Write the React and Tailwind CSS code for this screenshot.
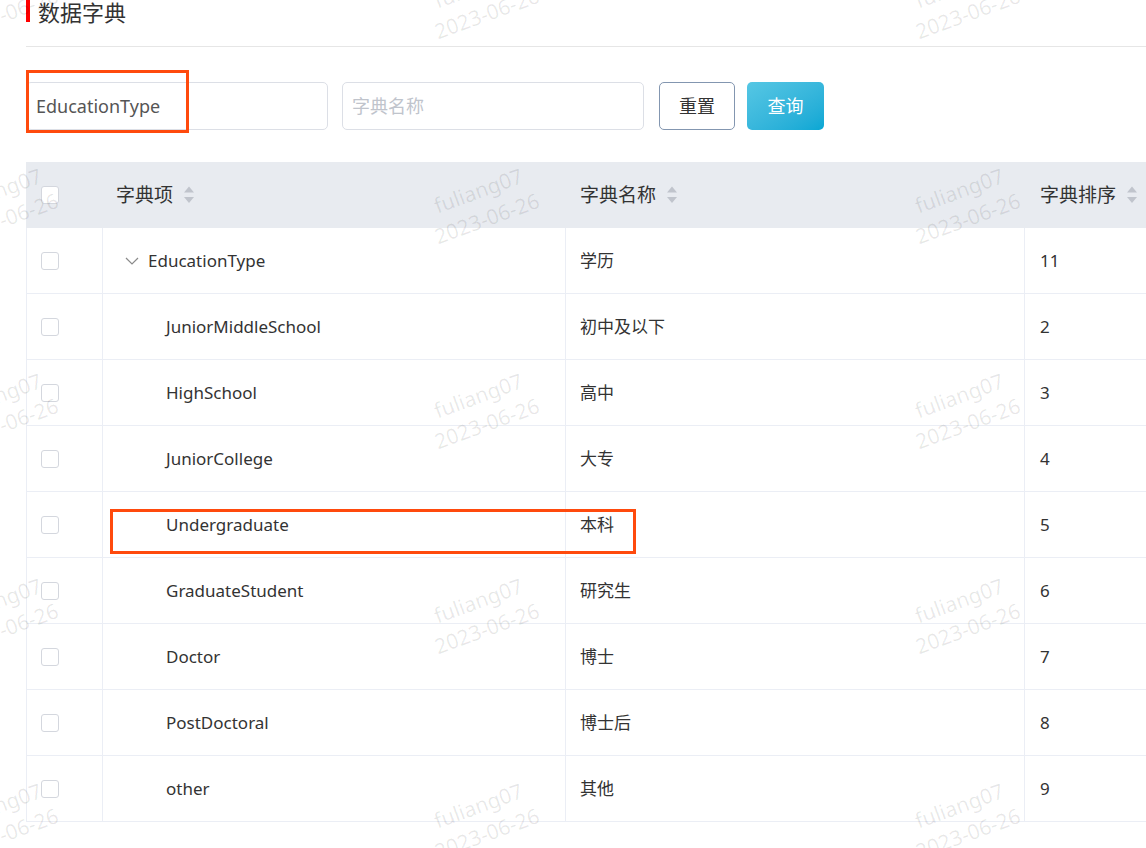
import React from "react";

const ROWS = [
  { code: "EducationType", name: "学历", sort: "11", parent: true },
  { code: "JuniorMiddleSchool", name: "初中及以下", sort: "2" },
  { code: "HighSchool", name: "高中", sort: "3" },
  { code: "JuniorCollege", name: "大专", sort: "4" },
  { code: "Undergraduate", name: "本科", sort: "5" },
  { code: "GraduateStudent", name: "研究生", sort: "6" },
  { code: "Doctor", name: "博士", sort: "7" },
  { code: "PostDoctoral", name: "博士后", sort: "8" },
  { code: "other", name: "其他", sort: "9" },
];

// watermark grid: column centres and row centres
const WM_X = [1, 482, 963];
const WM_Y = [0, 205, 410, 615, 820];

function SortIcon() {
  return (
    <svg width="12" height="20" viewBox="0 0 12 20" className="ml-[10px] shrink-0">
      <path d="M6 1.5 L11 7.5 L1 7.5 Z" fill="#c0c4cc" />
      <path d="M1 12 L11 12 L6 18 Z" fill="#c0c4cc" />
    </svg>
  );
}

function Checkbox() {
  return <span className="block h-[18px] w-[18px] rounded-[3px] border border-[#d4d7de] bg-white" />;
}

function Watermarks() {
  const items = [];
  for (const x of WM_X) for (const y of WM_Y) items.push({ x, y });
  return (
    <div className="pointer-events-none absolute inset-0">
      {items.map((w, i) => (
        <div
          key={i}
          className="absolute -translate-x-1/2 -translate-y-1/2 -rotate-[20deg] whitespace-nowrap text-[21px] leading-[29px] text-black/[0.09]"
          style={{ left: w.x, top: w.y }}
        >
          <div className="pl-[10px]">fuliang07</div>
          <div>2023-06-26</div>
        </div>
      ))}
    </div>
  );
}

export default function App() {
  return (
    <div className="relative h-[848px] w-[1146px] overflow-hidden bg-white pl-[26px] font-['Noto_Sans','Noto_Sans_CJK_SC',sans-serif] text-[#333]">
      {/* title */}
      <div className="flex h-[47px] items-start border-b border-[#e6e6e6]">
        <span className="h-[22px] w-[4px] bg-[#ff0000]" />
        <span className="ml-[8px] -mt-[3px] text-[22px] leading-[30px]">数据字典</span>
      </div>

      {/* search form */}
      <div className="mt-[35px] flex items-center">
        <div className="flex h-[48px] w-[302px] items-center rounded-[5px] border border-[#dcdfe6] pl-[9px] text-[18px] text-[#555]">
          EducationType
        </div>
        <div className="ml-[14px] flex h-[48px] w-[302px] items-center rounded-[5px] border border-[#dcdfe6] pl-[9px] text-[18px] text-[#c0c4cc]">
          字典名称
        </div>
        <button className="ml-[15px] h-[48px] w-[76px] rounded-[5px] border border-[#8396b0] bg-white text-[18px] text-[#333]">
          重置
        </button>
        <button className="ml-[12px] h-[48px] w-[77px] rounded-[5px] bg-linear-to-br from-[#55c7e4] to-[#05a7d4] text-[18px] text-white">
          查询
        </button>
      </div>

      {/* table */}
      <div className="mt-[32px] w-[1200px]">
        <div className="grid h-[66px] grid-cols-[76px_463px_459px_202px] items-center bg-[#e8ebf0] text-[19px]">
          <div className="border-l border-transparent pl-[14px]">
            <Checkbox />
          </div>
          <div className="flex items-center border-l border-transparent pl-[13px]">
            字典项<SortIcon />
          </div>
          <div className="flex items-center border-l border-transparent pl-[14px]">
            字典名称<SortIcon />
          </div>
          <div className="flex items-center border-l border-transparent pl-[15px]">
            字典排序<SortIcon />
          </div>
        </div>

        {ROWS.map((r) => (
          <div key={r.code} className="grid h-[66px] grid-cols-[76px_463px_459px_202px] text-[17px]">
            <div className="flex items-center border-b border-l border-[#ebeef5] pl-[14px]">
              <Checkbox />
            </div>
            <div className="flex items-center border-b border-l border-[#ebeef5] pl-[13px]">
              {r.parent ? (
                <span className="flex w-[32px] items-center justify-center">
                  <svg width="14" height="8" viewBox="0 0 14 8">
                    <path d="M1 1 L7 7 L13 1" fill="none" stroke="#8a8a8a" strokeWidth="1.2" />
                  </svg>
                </span>
              ) : (
                <span className="w-[50px]" />
              )}
              {r.code}
            </div>
            <div className="flex items-center border-b border-l border-[#ebeef5] pl-[14px]">{r.name}</div>
            <div className="flex items-center border-b border-l border-[#ebeef5] pl-[15px]">{r.sort}</div>
          </div>
        ))}
      </div>

      <Watermarks />

      {/* annotation boxes */}
      <div className="pointer-events-none absolute left-[26px] top-[70px] h-[63px] w-[163px] border-[3px] border-[#ff4a0d]" />
      <div className="pointer-events-none absolute left-[110px] top-[509px] h-[45px] w-[526px] border-[3px] border-[#ff4a0d]" />
    </div>
  );
}
